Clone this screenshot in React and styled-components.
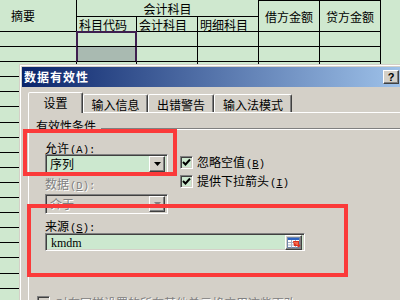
import React from "react";
import styled, { createGlobalStyle } from "styled-components";

const GlobalStyle = createGlobalStyle`
  html, body { margin: 0; padding: 0; }
  body { background: #cfe8cf; overflow: hidden; }
`;

const SEL = "#3e1f4f";

const Screen = styled.div`
  position: relative;
  width: 400px;
  height: 300px;
  overflow: hidden;
  background: #cfe8cf;
  font-family: "Noto Sans CJK SC", "Noto Sans", sans-serif;
  font-size: 12px;
  color: #000;
`;

/* worksheet behind the dialog */
const Sheet = styled.div`
  display: grid;
  grid-template-columns: 77px 60px 61px 61px 61px 61px 1fr;
  grid-template-rows: 17px 15px;
  grid-auto-rows: 15.1px;
`;

const selShadow = {
  top: `-1px 0 0 ${SEL}, inset 1px 0 0 ${SEL}, inset -1px 0 0 ${SEL}, 0 -1px 0 ${SEL}, inset 0 1px 0 ${SEL}, -1px -1px 0 ${SEL}`,
  fill: `-1px 0 0 ${SEL}, inset 1px 0 0 ${SEL}, inset -1px 0 0 ${SEL}`,
};

const Cell = styled.div`
  box-sizing: border-box;
  display: flex;
  align-items: center;
  justify-content: ${({ $align }) => $align || "flex-start"};
  padding-left: ${({ $pad }) => $pad || 0}px;
  border-right: 1px solid ${({ $sel }) => ($sel ? SEL : "#000")};
  border-bottom: 1px solid #000;
  border-top: ${({ $top }) => ($top ? "1px solid #000" : "none")};
  grid-column: ${({ $col }) => $col || "auto"};
  grid-row: ${({ $row }) => $row || "auto"};
  white-space: nowrap;
  background: ${({ $sel }) => ($sel === "fill" ? "#a9bab1" : "transparent")};
  box-shadow: ${({ $sel }) => ($sel ? selShadow[$sel] : "none")};
`;

const Edge = styled.div`
  grid-column: ${({ $col }) => $col || "auto"};
  grid-row: ${({ $row }) => $row || "auto"};
`;

/* dialog window */
const Dialog = styled.div`
  position: absolute;
  left: 19px;
  top: 64px;
  width: 404px;
  height: 250px;
  box-sizing: border-box;
  padding: 2px;
  background: #d4d0c8;
  border: 1px solid;
  border-color: #d4d0c8 #404040 #404040 #d4d0c8;
  box-shadow: inset 1px 1px 0 #fff, inset -1px -1px 0 #808080;
  display: flex;
  flex-direction: column;
`;

const TitleBar = styled.div`
  height: 20px;
  flex-shrink: 0;
  display: flex;
  align-items: center;
  justify-content: space-between;
  padding: 0 3px 0 2px;
  background: linear-gradient(to right, #0a246a, #a6caf0);
`;

const Title = styled.span`
  color: #fff;
  font-weight: bold;
  font-size: 12px;
  letter-spacing: 1px;
  line-height: 20px;
`;

const TitleButtons = styled.div`
  display: flex;
  gap: 2px;
`;

const Raised = styled.div`
  box-sizing: border-box;
  background: #d4d0c8;
  border: 1px solid;
  border-color: #fff #404040 #404040 #fff;
  box-shadow: inset -1px -1px 0 #808080;
  display: flex;
  align-items: center;
  justify-content: center;
`;

const CaptionButton = styled(Raised)`
  width: 16px;
  height: 14px;
  font-family: "Liberation Sans", Arial, sans-serif;
  font-weight: bold;
  font-size: 11px;
  line-height: 1;
`;

const Body = styled.div`
  flex: 1;
  display: flex;
  flex-direction: column;
  padding: 5px 6px 0 6px;
`;

const TabStrip = styled.div`
  display: flex;
  align-items: flex-end;
  height: 20px;
  position: relative;
  z-index: 1;
`;

const Tab = styled.div`
  box-sizing: border-box;
  width: ${({ $w }) => $w}px;
  height: ${({ $active }) => ($active ? 21 : 18)}px;
  margin-bottom: ${({ $active }) => ($active ? -1 : 0)}px;
  background: #d4d0c8;
  border: 1px solid;
  border-bottom: none;
  border-color: #fff #404040 transparent #fff;
  border-radius: 2px 2px 0 0;
  box-shadow: inset -1px 0 0 #808080;
  display: flex;
  align-items: center;
  justify-content: center;
  padding-top: ${({ $active }) => ($active ? 0 : 2)}px;
  line-height: 14px;
`;

const Panel = styled.div`
  flex: 1;
  border-top: 1px solid #fff;
  border-left: 1px solid #fff;
  padding: 6px 0 0 7px;
  display: flex;
  flex-direction: column;
`;

const GroupHead = styled.div`
  display: flex;
  align-items: flex-start;
  line-height: 14px;
`;

const EtchedLine = styled.div`
  flex: 1;
  margin: 9px 0 0 5px;
  border-top: 1px solid #808080;
  border-bottom: 1px solid #fff;
`;

const Criteria = styled.div`
  display: grid;
  grid-template-columns: 123px auto;
  column-gap: 12px;
  margin: 8px 0 0 9px;
  align-items: start;
`;

const Label = styled.div`
  grid-column: 1;
  height: 13px;
  line-height: 13px;
  margin-top: ${({ $mt }) => $mt || 0}px;
  color: ${({ $disabled }) => ($disabled ? "#808080" : "#000")};
  text-shadow: ${({ $disabled }) => ($disabled ? "1px 1px 0 #fff" : "none")};
  white-space: nowrap;
`;

const Key = styled.span`
  font-family: "Liberation Mono", monospace;
  font-size: 10.5px;
  line-height: 1;
  margin-left: 1px;
`;

const Sunken = styled.div`
  box-sizing: border-box;
  border: 1px solid;
  border-color: #808080 #fff #fff #808080;
  box-shadow: inset 1px 1px 0 #404040, inset -1px -1px 0 #d4d0c8;
`;

const Select = styled(Sunken)`
  grid-column: 1;
  height: 20px;
  margin-top: ${({ $mt }) => $mt || 0}px;
  padding: 2px;
  display: flex;
  align-items: center;
  justify-content: space-between;
  background: ${({ $disabled }) => ($disabled ? "#d4d0c8" : "#cce8cf")};
  color: ${({ $disabled }) => ($disabled ? "#808080" : "#000")};
  text-shadow: ${({ $disabled }) => ($disabled ? "1px 1px 0 #fff" : "none")};
`;

const SelectText = styled.span`
  padding-left: 2px;
  line-height: 14px;
`;

const DropButton = styled(Raised)`
  width: 16px;
  height: 16px;
`;

const CheckList = styled.div`
  grid-column: 2;
  grid-row: 2 / span 2;
  display: flex;
  flex-direction: column;
  gap: 6px;
  padding-top: 2px;
`;

const CheckRow = styled.div`
  display: flex;
  align-items: center;
  gap: 4px;
  height: 13px;
  line-height: 13px;
  white-space: nowrap;
  color: ${({ $disabled }) => ($disabled ? "#808080" : "#000")};
  text-shadow: ${({ $disabled }) => ($disabled ? "1px 1px 0 #fff" : "none")};
`;

const Box = styled(Sunken)`
  width: 13px;
  height: 13px;
  flex-shrink: 0;
  display: flex;
  align-items: center;
  justify-content: center;
  background: ${({ $disabled }) => ($disabled ? "#d4d0c8" : "#cce8cf")};
`;

const SourceInput = styled(Sunken)`
  grid-column: 1 / span 2;
  width: 260px;
  height: 18px;
  margin-top: 1px;
  padding: 2px 2px 1px 3px;
  display: flex;
  align-items: center;
  justify-content: space-between;
  background: #cce8cf;
`;

const SourceText = styled.span`
  font-family: "Liberation Serif", "Times New Roman", serif;
  font-size: 12px;
  line-height: 14px;
  padding-left: 2px;
`;

const RangeButton = styled(Raised)`
  width: 17px;
  height: 15px;
`;

const ApplyRow = styled(CheckRow)`
  margin: 45px 0 0 1px;
  gap: 6px;
  align-items: flex-start;
`;

/* red annotation frames drawn over the screenshot */
const Mark = styled.div`
  position: absolute;
  box-sizing: border-box;
  border: ${({ $w }) => $w}px solid #fb3a3a;
`;

const ArrowDown = ({ color = "#000" }) => (
  <svg width="7" height="4" viewBox="0 0 7 4">
    <polygon points="0,0 7,0 3.5,4" fill={color} />
  </svg>
);

const Check = () => (
  <svg width="9" height="9" viewBox="0 0 9 9">
    <polyline points="1,4 3.5,6.5 8,1.5" fill="none" stroke="#000" strokeWidth="2" />
  </svg>
);

const RangeIcon = () => (
  <svg width="14" height="12" viewBox="0 0 14 12">
    <rect x="0.5" y="0.5" width="12" height="10" fill="#fff" stroke="#6f86aa" />
    <rect x="1" y="1" width="11" height="2" fill="#2f63c0" />
    <path d="M1 5.5h11M1 8h11M4.5 3v7.5M8.5 3v7.5" stroke="#a9b1c2" strokeWidth="1" />
    <polygon points="6,4 12,4 12,7 13.5,8.5 11.5,10.5 10,9 7,9" fill="#e0321e" />
    <polygon points="7,5 11,5 11,8 9.5,8 7,5.5" fill="#f46a4a" />
  </svg>
);

const CloseIcon = () => (
  <svg width="8" height="7" viewBox="0 0 8 7">
    <path d="M0.5 0.5L7.5 6.5M7.5 0.5L0.5 6.5" stroke="#000" strokeWidth="1.6" />
  </svg>
);

const rows = Array.from({ length: 18 }, (_, i) => i);
const dataCols = [1, 2, 3, 4, 5, 6];

const App = () => {
  return (
    <Screen>
      <GlobalStyle />
      <Sheet>
        <Cell $col="1" $row="1 / span 2" $pad={11}>摘要</Cell>
        <Cell $col="2 / span 3" $row="1" $align="center">会计科目</Cell>
        <Cell $col="5" $row="1 / span 2" $align="center" $top>借方金额</Cell>
        <Cell $col="6" $row="1 / span 2" $align="center" $top>贷方金额</Cell>
        <Edge $col="7" $row="1 / span 2" />
        <Cell $col="2" $row="2" $pad={2}>科目代码</Cell>
        <Cell $col="3" $row="2" $pad={2}>会计科目</Cell>
        <Cell $col="4" $row="2" $pad={2}>明细科目</Cell>
        {rows.map((r) => (
          <React.Fragment key={r}>
            {dataCols.map((c) => (
              <Cell
                key={c}
                $sel={c === 2 && r === 0 ? "top" : c === 2 && r === 1 ? "fill" : undefined}
              />
            ))}
            <Edge />
          </React.Fragment>
        ))}
      </Sheet>

      <Dialog>
        <TitleBar>
          <Title>数据有效性</Title>
          <TitleButtons>
            <CaptionButton>?</CaptionButton>
            <CaptionButton><CloseIcon /></CaptionButton>
          </TitleButtons>
        </TitleBar>
        <Body>
          <TabStrip>
            <Tab $w={55} $active>设置</Tab>
            <Tab $w={65}>输入信息</Tab>
            <Tab $w={66}>出错警告</Tab>
            <Tab $w={78}>输入法模式</Tab>
          </TabStrip>
          <Panel>
            <GroupHead>
              <span>有效性条件</span>
              <EtchedLine />
            </GroupHead>
            <Criteria>
              <Label>允许<Key>(<u>A</u>):</Key></Label>
              <Select>
                <SelectText>序列</SelectText>
                <DropButton><ArrowDown /></DropButton>
              </Select>
              <CheckList>
                <CheckRow>
                  <Box><Check /></Box>
                  <span>忽略空值<Key>(<u>B</u>)</Key></span>
                </CheckRow>
                <CheckRow>
                  <Box><Check /></Box>
                  <span>提供下拉箭头<Key>(<u>I</u>)</Key></span>
                </CheckRow>
              </CheckList>
              <Label $mt={3} $disabled>数据<Key>(<u>D</u>):</Key></Label>
              <Select $mt={4} $disabled>
                <SelectText>介于</SelectText>
                <DropButton><ArrowDown color="#808080" /></DropButton>
              </Select>
              <Label $mt={5}>来源<Key>(<u>S</u>):</Key></Label>
              <SourceInput>
                <SourceText>kmdm</SourceText>
                <RangeButton><RangeIcon /></RangeButton>
              </SourceInput>
            </Criteria>
            <ApplyRow $disabled>
              <Box $disabled />
              <span>对有同样设置的所有其他单元格应用这些更改<Key>(<u>P</u>)</Key></span>
            </ApplyRow>
          </Panel>
        </Body>
      </Dialog>

      <Mark $w={4} style={{ left: 23, top: 129, width: 154, height: 47 }} />
      <Mark $w={4} style={{ left: 27, top: 204, width: 321, height: 73 }} />
    </Screen>
  );
};

export default App;
